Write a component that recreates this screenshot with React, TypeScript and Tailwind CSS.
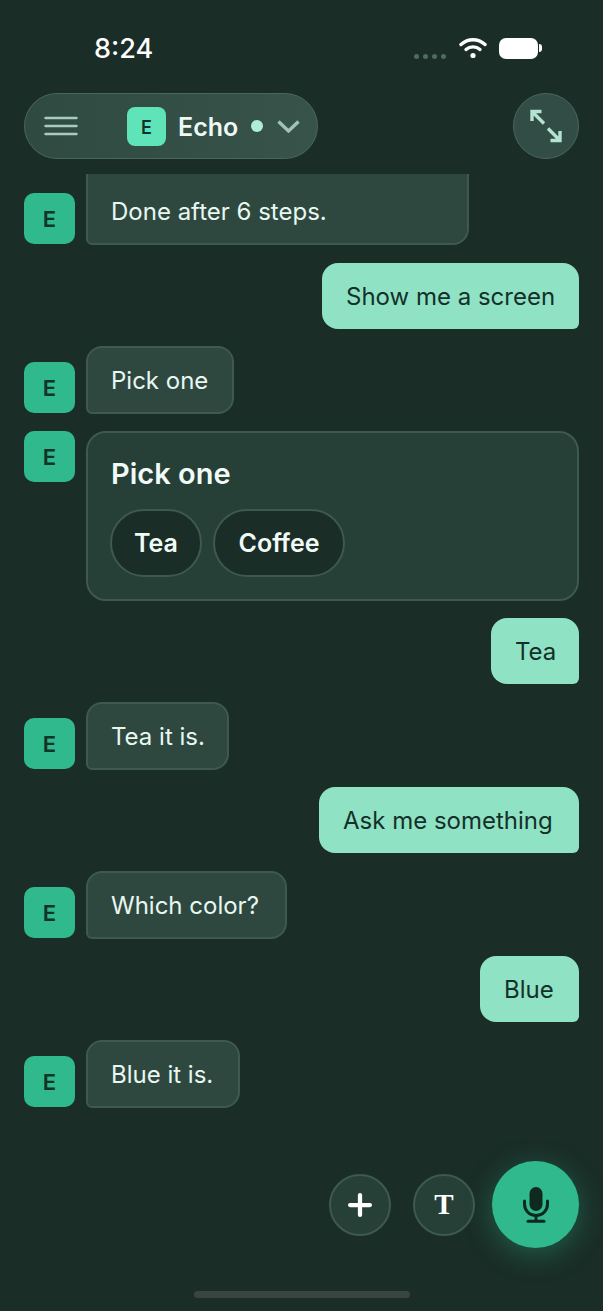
import { Plus } from "lucide-react";

type Msg = { kind: "me" | "bot"; text: string; gap: string; width: string };

const messages: Msg[] = [
  { kind: "me", text: "Show me a screen", gap: "mt-[18px]", width: "w-[257px]" },
  { kind: "bot", text: "Pick one", gap: "mt-[17px]", width: "w-[148px]" },
];

const after: Msg[] = [
  { kind: "me", text: "Tea", gap: "mt-[17px]", width: "w-[88px]" },
  { kind: "bot", text: "Tea it is.", gap: "mt-[18px]", width: "w-[143px]" },
  { kind: "me", text: "Ask me something", gap: "mt-[17px]", width: "w-[260px]" },
  { kind: "bot", text: "Which color?", gap: "mt-[18px]", width: "w-[201px]" },
  { kind: "me", text: "Blue", gap: "mt-[17px]", width: "w-[99px]" },
  { kind: "bot", text: "Blue it is.", gap: "mt-[18px]", width: "w-[154px]" },
];

const Avatar = ({ className = "" }: { className?: string }) => (
  <div
    className={`flex h-[51px] w-[51px] shrink-0 items-center justify-center rounded-[10px] bg-[#2fb98d] pt-[2px] text-[22px] font-semibold text-[#123328] ${className}`}
  >
    E
  </div>
);

const Row = ({ msg }: { msg: Msg }) => {
  if (msg.kind === "me") {
    return (
      <div className={`flex justify-end ${msg.gap}`}>
        <div
          className={`flex h-[66px] items-center rounded-[16px] rounded-br-[6px] bg-[#8fe3c4] pl-[24px] pt-[2px] text-[24px] text-[#14302a] ${msg.width}`}
        >
          {msg.text}
        </div>
      </div>
    );
  }
  return (
    <div className={`flex items-end gap-[11px] ${msg.gap}`}>
      <Avatar className="mb-px" />
      <div
        className={`flex h-[68px] items-center rounded-[16px] rounded-bl-[6px] border-2 border-[#3d5950] bg-[#2e4840] pl-[23px] pt-[2px] text-[24px] text-[#e9f7f1] ${msg.width}`}
      >
        {msg.text}
      </div>
    </div>
  );
};

const ExpandIcon = () => (
  <svg width="34" height="34" viewBox="0 0 34 34" fill="none" stroke="#b5e3d1" strokeWidth="3.4">
    <path d="M3 12V2.5H12.5M3 2.5L15 14.5" />
    <path d="M31 22V31.5H21.5M31 31.5L19 19.5" />
  </svg>
);

const MenuIcon = () => (
  <svg width="34" height="20" viewBox="0 0 34 20" fill="none" stroke="#a9cbbd" strokeWidth="2.4" strokeLinecap="round">
    <path d="M1.5 2H32.5M1.5 10H32.5M1.5 18H32.5" />
  </svg>
);

const MicIcon = () => (
  <svg width="26" height="36" viewBox="0 0 26 36" fill="none" stroke="#10291f" strokeWidth="3" strokeLinecap="round">
    <rect x="6.5" y="0" width="13" height="24" rx="6.5" fill="#10291f" stroke="none" />
    <path d="M1.5 14V17C1.5 23.5 6.5 28.5 13 28.5C19.5 28.5 24.5 23.5 24.5 17V14" />
    <path d="M13 28.5V33.5" />
    <path d="M5 34.2H21" />
  </svg>
);

export default function App() {
  return (
    <div className="flex h-[1311px] w-[603px] flex-col overflow-hidden bg-[#1a2d27] font-['Inter',sans-serif]">
      {/* status bar */}
      <div className="flex h-[93px] shrink-0 items-start justify-between pl-[94px] pr-[61px] pt-[32px]">
        <span className="text-[27px] leading-[34px] font-medium text-white">8:24</span>
        <div className="flex items-center pt-[5px]">
          <div className="mr-[13px] mt-[16px] flex gap-[4px]">
            <span className="h-[5px] w-[5px] rounded-full bg-[#4d6b61]" />
            <span className="h-[5px] w-[5px] rounded-full bg-[#4d6b61]" />
            <span className="h-[5px] w-[5px] rounded-full bg-[#4d6b61]" />
            <span className="h-[5px] w-[5px] rounded-full bg-[#4d6b61]" />
          </div>
          <svg width="28" height="22" viewBox="0 0 28 22" fill="none" stroke="#fff" strokeWidth="3.4" strokeLinecap="round">
            <path d="M2 7.5C9 1.2 19 1.2 26 7.5" />
            <path d="M7 12.5C11 9 17 9 21 12.5" />
            <circle cx="14" cy="18.5" r="2.6" fill="#fff" stroke="none" />
          </svg>
          <div className="ml-[12px] h-[21px] w-[39px] rounded-[7px] bg-white" />
          <div className="ml-[1px] h-[8px] w-[3px] rounded-r-full bg-white" />
        </div>
      </div>

      {/* header */}
      <div className="flex shrink-0 items-center justify-between px-6">
        <div className="flex h-[66px] w-[294px] items-center rounded-full border border-[#4a665c] bg-gradient-to-r from-[#2e4a41] to-[#38534a] pl-[19px]">
          <MenuIcon />
          <div className="ml-[49px] flex h-[39px] w-[39px] items-center justify-center rounded-[8px] bg-[#5fe3b8] pt-[2px] text-[18px] font-semibold text-[#123328]">
            E
          </div>
          <span className="ml-[12px] pt-[3px] text-[25px] font-semibold text-[#eef9f4]">Echo</span>
          <span className="ml-[13px] h-[12px] w-[12px] rounded-full bg-[#aeeed8]" />
          <svg width="23" height="13" viewBox="0 0 23 13" fill="none" stroke="#9ec4b5" strokeWidth="3.4" className="ml-[14px]">
            <path d="M1.5 1.5L11.5 11L21.5 1.5" />
          </svg>
        </div>
        <div className="flex h-[66px] w-[66px] items-center justify-center rounded-full border border-[#4a665c] bg-[#324d45]">
          <ExpandIcon />
        </div>
      </div>

      {/* chat, the first bubble runs under the header */}
      <div className="mt-[15px] flex h-[934px] shrink-0 flex-col justify-end overflow-hidden px-6">
        <div className="flex items-end gap-[11px]">
          <Avatar className="mb-px" />
          <div className="flex h-[120px] w-[383px] items-end rounded-[16px] rounded-bl-[6px] border-2 border-[#3d5950] bg-[#2e4840] pb-[13px] pl-[23px] text-[24px] text-[#e9f7f1]">
            Done after 6 steps.
          </div>
        </div>
        {messages.map((m) => (
          <Row key={m.text} msg={m} />
        ))}
        <div className="mt-[17px] flex items-start gap-[11px]">
          <Avatar />
          <div className="h-[170px] flex-1 rounded-[20px] border-2 border-[#3d5950] bg-[#263f37] pl-[23px] pt-[23px]">
            <div className="text-[29px] leading-[36px] font-semibold text-[#f0faf6]">Pick one</div>
            <div className="-ml-px mt-[17px] flex gap-[11px]">
              <div className="flex h-[68px] w-[92px] items-center justify-center rounded-full border-2 border-[#3d5950] bg-[#1a2d27] pt-[2px] text-[25px] font-semibold text-[#f0faf6]">
                Tea
              </div>
              <div className="flex h-[68px] w-[132px] items-center justify-center rounded-full border-2 border-[#3d5950] bg-[#1a2d27] pt-[2px] text-[25px] font-semibold text-[#f0faf6]">
                Coffee
              </div>
            </div>
          </div>
        </div>
        {after.map((m) => (
          <Row key={m.text} msg={m} />
        ))}
      </div>

      {/* input actions */}
      <div className="mt-[53px] flex h-[87px] shrink-0 items-center justify-end pr-6">
        <div className="flex h-[62px] w-[62px] items-center justify-center rounded-full border-2 border-[#3d5950] bg-[#263f37]">
          <Plus size={34} strokeWidth={3} className="text-white" />
        </div>
        <div className="ml-[22px] flex h-[62px] w-[62px] items-center justify-center rounded-full border-2 border-[#3d5950] bg-[#263f37] font-['Liberation_Serif',serif] text-[29px] font-bold text-white">
          T
        </div>
        <div className="ml-[17px] flex h-[87px] w-[87px] items-center justify-center rounded-full bg-[#2fb98d] shadow-[0_6px_28px_rgba(47,185,141,0.35)]">
          <MicIcon />
        </div>
      </div>

      <div className="mt-[43px] flex justify-center">
        <div className="h-[7px] w-[216px] rounded-full bg-[#39453f]" />
      </div>
    </div>
  );
}
